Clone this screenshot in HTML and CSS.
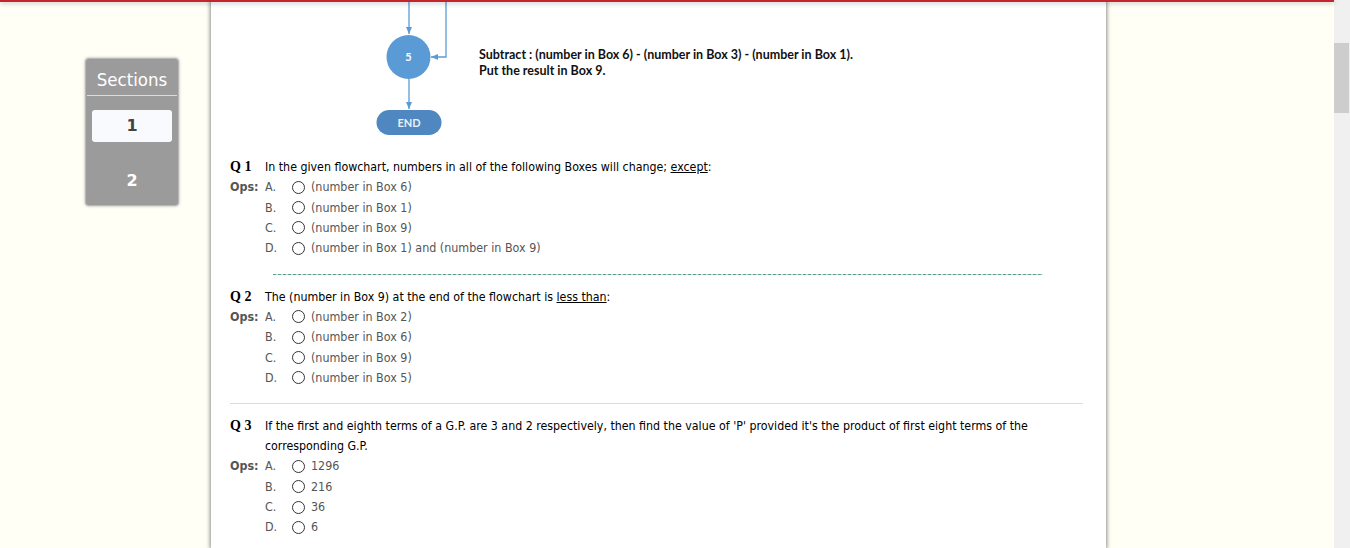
FILE: index.html
```html
<!DOCTYPE html>
<html>
<head>
<meta charset="utf-8">
<link rel="stylesheet" href="styles.css">
</head>
<body>
<div class="topbar"></div>
<div class="page">
  <aside class="left">
    <nav class="sections">
      <div class="sections-title">Sections</div>
      <div class="sec-btn active">1</div>
      <div class="sec-btn">2</div>
    </nav>
  </aside>
  <main class="panel">
    <div class="flow">
      <svg class="flow-svg" width="520" height="157" viewBox="0 0 520 157">
        <defs>
          <marker id="ah" markerWidth="8" markerHeight="8" refX="7" refY="4" orient="auto" markerUnits="userSpaceOnUse">
            <path d="M0,1 L7,4 L0,7 Z" fill="#5b9bd5"/>
          </marker>
        </defs>
        <line x1="33" y1="0" x2="33" y2="34" stroke="#5b9bd5" stroke-width="1.3" marker-end="url(#ah)"/>
        <polyline points="70,0 70,57 55,57" fill="none" stroke="#5b9bd5" stroke-width="1.3" marker-end="url(#ah)"/>
        <circle cx="32.5" cy="57" r="22" fill="#5b9bd5"/>
        <text x="32.5" y="61" class="svg-num">5</text>
        <line x1="33" y1="79" x2="33" y2="109" stroke="#5b9bd5" stroke-width="1.3" marker-end="url(#ah)"/>
        <rect x="0.5" y="110" width="65" height="25" rx="12.5" fill="#4f87c0"/>
        <text x="33" y="127" class="svg-end">END</text>
        <text x="103" y="59" class="svg-desc">Subtract : (number in Box 6) - (number in Box 3) - (number in Box 1).</text>
        <text x="103" y="75" class="svg-desc">Put the result in Box 9.</text>
      </svg>
    </div>

    <section class="q">
      <div class="q-label">Q 1</div>
      <div class="q-text">In the given flowchart, numbers in all of the following Boxes will change; <u>except</u>:</div>
      <div class="ops-label">Ops:</div>
      <ul class="opts">
        <li><span class="letter">A.</span><span class="radio"></span><span class="otext">(number in Box 6)</span></li>
        <li><span class="letter">B.</span><span class="radio"></span><span class="otext">(number in Box 1)</span></li>
        <li><span class="letter">C.</span><span class="radio"></span><span class="otext">(number in Box 9)</span></li>
        <li><span class="letter">D.</span><span class="radio"></span><span class="otext">(number in Box 1) and (number in Box 9)</span></li>
      </ul>
    </section>

    <div class="dash-sep"></div>

    <section class="q">
      <div class="q-label">Q 2</div>
      <div class="q-text">The (number in Box 9) at the end of the flowchart is <u>less than</u>:</div>
      <div class="ops-label">Ops:</div>
      <ul class="opts">
        <li><span class="letter">A.</span><span class="radio"></span><span class="otext">(number in Box 2)</span></li>
        <li><span class="letter">B.</span><span class="radio"></span><span class="otext">(number in Box 6)</span></li>
        <li><span class="letter">C.</span><span class="radio"></span><span class="otext">(number in Box 9)</span></li>
        <li><span class="letter">D.</span><span class="radio"></span><span class="otext">(number in Box 5)</span></li>
      </ul>
    </section>

    <div class="solid-sep"></div>

    <section class="q">
      <div class="q-label">Q 3</div>
      <div class="q-text">If the first and eighth terms of a G.P. are 3 and 2 respectively, then find the value of 'P' provided it's the product of first eight terms of the corresponding G.P.</div>
      <div class="ops-label">Ops:</div>
      <ul class="opts">
        <li><span class="letter">A.</span><span class="radio"></span><span class="otext">1296</span></li>
        <li><span class="letter">B.</span><span class="radio"></span><span class="otext">216</span></li>
        <li><span class="letter">C.</span><span class="radio"></span><span class="otext">36</span></li>
        <li><span class="letter">D.</span><span class="radio"></span><span class="otext">6</span></li>
      </ul>
    </section>
  </main>
  <div class="right"></div>
  <div class="scrollbar"><div class="thumb"></div></div>
</div>
</body>
</html>
```

FILE: styles.css
```css
html, body {
  margin: 0;
  padding: 0;
  height: 100%;
  overflow: hidden;
}
body {
  background: #fffff6;
  font-family: "DejaVu Sans Condensed", "DejaVu Sans", sans-serif;
  font-size: 12.4px;
  color: #000;
  position: relative;
}
.topbar {
  position: absolute;
  left: 0;
  top: 0;
  width: 1334px;
  height: 2px;
  background: #c1262e;
  box-shadow: 0 1px 5px rgba(0,0,0,0.35);
  z-index: 5;
}
.page {
  display: flex;
  height: 548px;
}
.left {
  width: 211px;
  flex: none;
  padding-top: 58px;
  box-sizing: border-box;
}
.sections {
  margin-left: 85px;
  width: 94px;
  height: 148px;
  box-sizing: border-box;
  background: #9b9b9b;
  border-radius: 4px;
  border: 1px solid #b8b8b8;
  box-shadow: 0 0 3px rgba(0,0,0,0.35);
  padding: 0 1px;
  display: flex;
  flex-direction: column;
  align-items: center;
}
.sections-title {
  align-self: stretch;
  color: #fff;
  font-size: 18.5px;
  text-align: center;
  line-height: 20px;
  padding-top: 11px;
  padding-bottom: 5px;
  border-bottom: 1px solid #dcdcdc;
}
.sec-btn {
  width: 80px;
  height: 32px;
  line-height: 32px;
  text-align: center;
  font-weight: bold;
  font-size: 16px;
  color: #fff;
  font-family: "DejaVu Sans", sans-serif;
}
.sec-btn.active {
  margin-top: 14px;
  background: #f8fafd;
  color: #444;
  border-radius: 3px;
  margin-bottom: 23px;
}
.panel {
  width: 895px;
  flex: none;
  background: #fff;
  box-shadow: 0 0 4px 1px rgba(0,0,0,0.45);
  padding: 0 23px 0 19px;
  box-sizing: border-box;
  position: relative;
  z-index: 2;
}
.flow {
  height: 157px;
  padding-left: 146px;
}
.flow-svg {
  display: block;
}
.svg-num {
  font-family: "Lato", sans-serif;
  font-weight: bold;
  font-size: 11px;
  fill: #fff;
  text-anchor: middle;
}
.svg-end {
  font-family: "Lato", sans-serif;
  font-weight: bold;
  font-size: 11px;
  fill: #e8f0f8;
  text-anchor: middle;
}
.svg-desc {
  font-family: "Lato", sans-serif;
  font-weight: bold;
  font-size: 12.5px;
  fill: #111;
}
.q {
  display: grid;
  grid-template-columns: 35px 1fr;
  line-height: 20px;
}
.q-label {
  font-family: "Liberation Serif", serif;
  font-weight: bold;
  font-size: 14px;
}
.q-text {
  color: #000;
  font-size: 12.3px;
}
.ops-label {
  font-weight: bold;
  color: #555;
}
.opts {
  list-style: none;
  margin: 0;
  padding: 0;
}
.opts li {
  display: flex;
  align-items: center;
  height: 20.4px;
  color: #555;
}
.letter {
  width: 27px;
}
.radio {
  width: 11px;
  height: 11px;
  border: 1px solid #333;
  border-radius: 50%;
  margin-right: 6px;
  box-sizing: content-box;
  background: #fff;
}
.dash-sep {
  margin: 15px 40px 12px 43px;
  height: 1px;
  background: repeating-linear-gradient(90deg, #5c9f8b 0 3px, #cfd9d5 3px 5px);
}
.solid-sep {
  margin: 15px 0 12px 0;
  height: 1px;
  background: #dcdcdc;
}
.right {
  flex: 1;
}
.scrollbar {
  width: 16px;
  flex: none;
  background: #f0f0f0;
  padding-top: 43px;
  box-sizing: border-box;
}
.thumb {
  width: 15px;
  height: 70px;
  background: #cdcdcd;
}
```
